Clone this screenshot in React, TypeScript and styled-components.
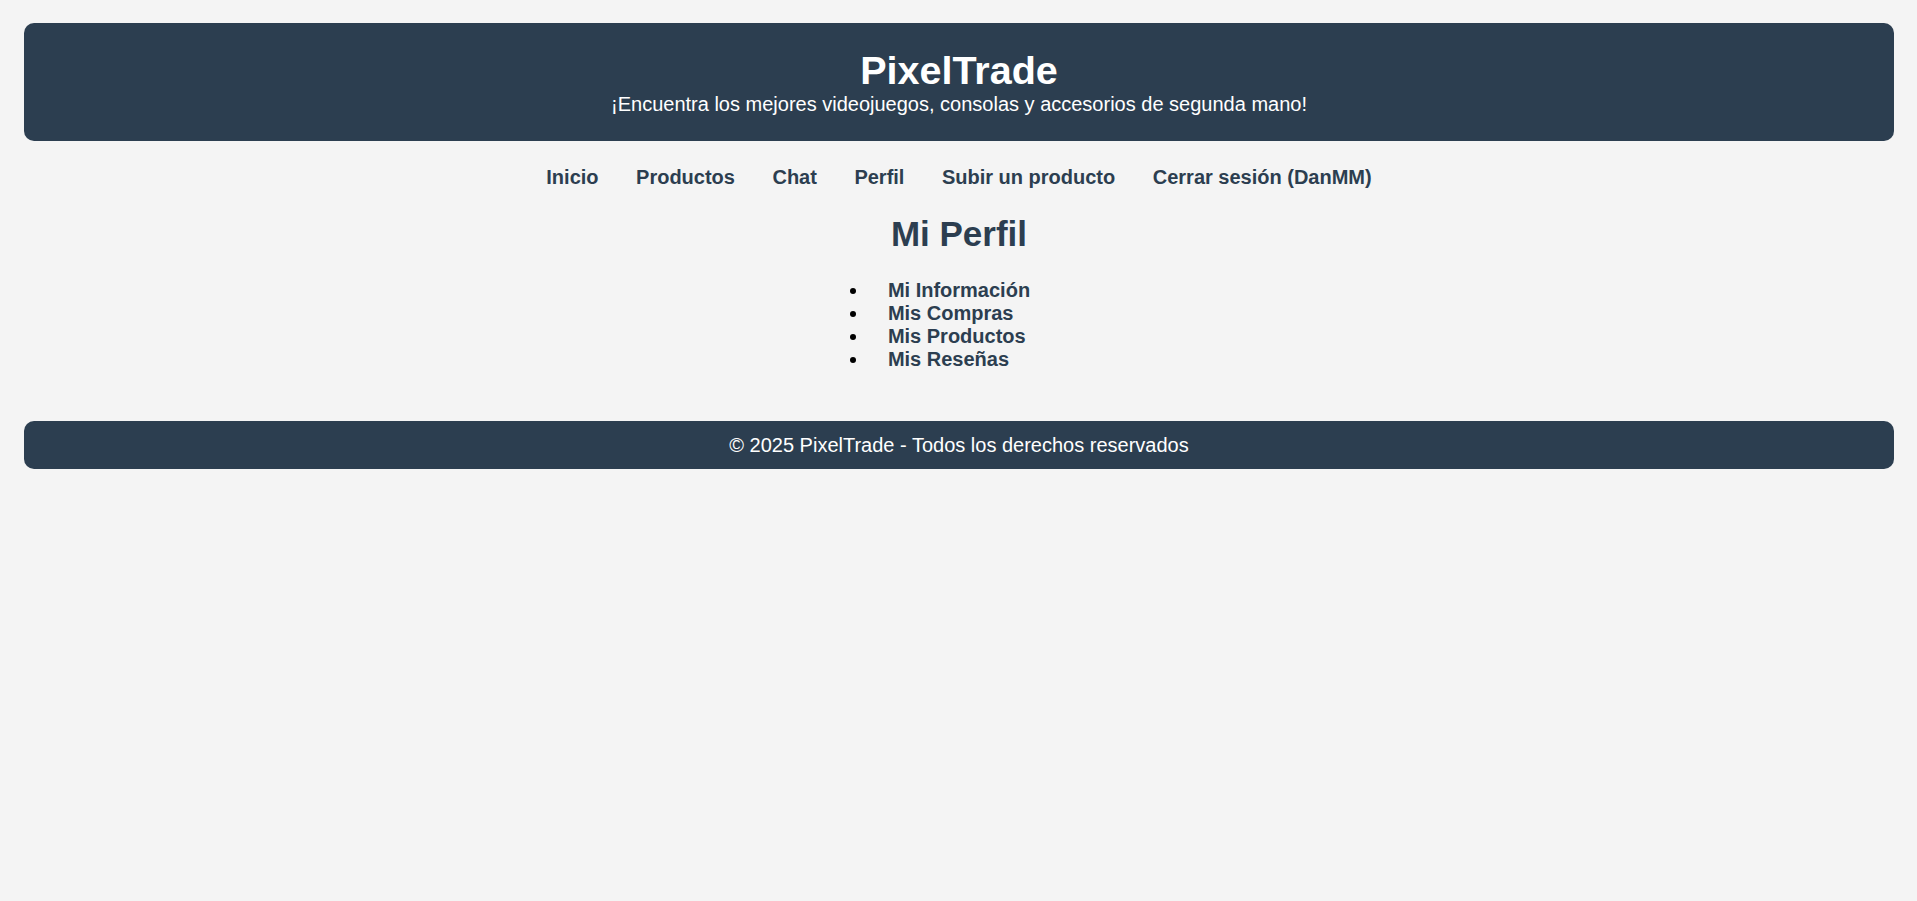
import React from "react";
import styled, { createGlobalStyle } from "styled-components";

const GlobalStyle = createGlobalStyle`
  html, body {
    margin: 0;
    padding: 0;
    background: #f4f4f4;
    font-family: "Liberation Sans", Arial, sans-serif;
  }
`;

const Page = styled.div`
  padding: 23px 23px 23px 24px;
`;

const Header = styled.header`
  background: #2c3e50;
  color: #ffffff;
  text-align: center;
  border-radius: 10px;
  padding: 27px 0 25.5px;
`;

const Title = styled.h1`
  margin: 0;
  font-size: 39.5px;
  line-height: 40px;
  font-weight: 700;
`;

const Tagline = styled.p`
  margin: 2.5px 0 0;
  font-size: 20px;
  line-height: 23px;
`;

const Nav = styled.nav`
  display: flex;
  justify-content: center;
  gap: 37.5px;
  margin-top: 25px;
`;

const NavLink = styled.a`
  font-size: 20px;
  line-height: 23px;
  font-weight: 700;
  color: #2c3e50;
  text-decoration: none;
`;

const Main = styled.main`
  display: flex;
  flex-direction: column;
  align-items: center;
`;

const Heading = styled.h2`
  margin: 25px 0 0;
  font-size: 35px;
  line-height: 39px;
  font-weight: 700;
  color: #2c3e50;
  text-align: center;
`;

const List = styled.ul`
  list-style: none;
  margin: 26px 0 0;
  padding: 0 38px 0 0;
  display: flex;
  flex-direction: column;
`;

const Item = styled.li`
  display: flex;
  align-items: center;
  gap: 32px;
  line-height: 23px;

  &::before {
    content: "";
    width: 6px;
    height: 6px;
    border-radius: 50%;
    background: #000000;
    flex: none;
  }
`;

const ItemLink = styled.a`
  font-size: 20px;
  font-weight: 700;
  color: #2c3e50;
  text-decoration: none;
`;

const Footer = styled.footer`
  margin-top: 50px;
  background: #2c3e50;
  color: #ffffff;
  text-align: center;
  border-radius: 10px;
  padding: 12.5px 0;
  font-size: 20px;
  line-height: 23px;
`;

const navItems = [
  "Inicio",
  "Productos",
  "Chat",
  "Perfil",
  "Subir un producto",
  "Cerrar sesión (DanMM)",
];

const profileItems = ["Mi Información", "Mis Compras", "Mis Productos", "Mis Reseñas"];

export default function App() {
  return (
    <>
      <GlobalStyle />
      <Page>
        <Header>
          <Title>PixelTrade</Title>
          <Tagline>¡Encuentra los mejores videojuegos, consolas y accesorios de segunda mano!</Tagline>
        </Header>
        <Nav>
          {navItems.map((n) => (
            <NavLink key={n} href="#">
              {n}
            </NavLink>
          ))}
        </Nav>
        <Main>
          <Heading>Mi Perfil</Heading>
          <List>
            {profileItems.map((p) => (
              <Item key={p}>
                <ItemLink href="#">{p}</ItemLink>
              </Item>
            ))}
          </List>
        </Main>
        <Footer>© 2025 PixelTrade - Todos los derechos reservados</Footer>
      </Page>
    </>
  );
}
